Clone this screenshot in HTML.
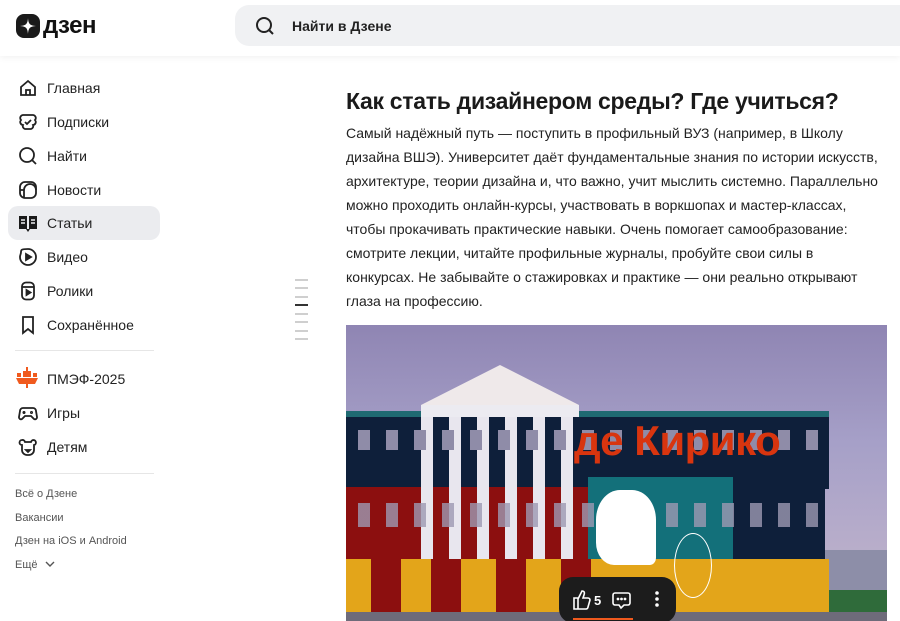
<!DOCTYPE html>
<html><head><meta charset="utf-8"><style>
*{margin:0;padding:0;box-sizing:border-box}
body{width:900px;height:621px;overflow:hidden;background:#fff;font-family:"Liberation Sans","DejaVu Sans",sans-serif;color:#1f1f1f;position:relative}
.hdr{position:absolute;left:0;top:0;width:900px;height:56px;background:#fff;box-shadow:0 2px 6px rgba(0,0,0,.05)}
.logo{position:absolute;left:16px;top:14px;display:flex;align-items:center}
.logo .b{width:24px;height:24px;background:#1a1a1a;border-radius:8px;position:relative}
.logo span{font-size:24px;font-weight:bold;margin-left:3px;letter-spacing:-.5px;line-height:24px;color:#111}
.search{position:absolute;left:235px;top:5px;width:680px;height:41px;background:#f0f1f3;border-radius:14px}
.search span{position:absolute;left:57px;top:13px;font-size:14px;font-weight:bold;color:#222}
.nav{position:absolute;left:8px;width:152px;height:34px;border-radius:10px}
.nav.act{background:#ebecef}
.nav svg{position:absolute;left:10px;top:7px}
.nav span{position:absolute;left:39px;top:9px;font-size:14px;color:#222}
.sep{position:absolute;left:15px;width:139px;height:1px;background:#e6e6e6}
.sm{position:absolute;left:15px;font-size:11px;color:#555}
h1{position:absolute;left:346px;top:88px;font-size:23px;font-weight:bold;color:#1a1a1a;letter-spacing:-.3px}
.p{position:absolute;left:346px;top:121px;font-size:14px;line-height:24px;color:#222;white-space:nowrap}
.tick{position:absolute;left:295px;width:13px;height:2px;background:#cfcfcf}
.img{position:absolute;left:346px;top:325px;width:541px;height:296px;overflow:hidden;background:linear-gradient(#8f85b3,#a6a0c8 40%,#c5b7cc)}
.img div{position:absolute}
</style></head><body>
<div class="hdr">
 <div class="logo"><div class="b"><svg width="24" height="24" viewBox="0 0 24 24"><path d="M12 4C12.4 10 14 11.6 20 12 14 12.4 12.4 14 12 20 11.6 14 10 12.4 4 12 10 11.6 11.6 10 12 4Z" fill="#fff"/></svg></div><span>дзен</span></div>
 <div class="search"><svg style="position:absolute;left:20px;top:11px" width="20" height="20" viewBox="0 0 20 20" fill="none" stroke="#222" stroke-width="2"><circle cx="9" cy="9" r="7"/><path d="M14 14l4 4"/></svg><span>Найти в Дзене</span></div>
</div>

<div class="nav" style="top:71px"><svg width="20" height="20" viewBox="0 0 20 20" fill="none" stroke="#222" stroke-width="1.8"><path d="M3 9l7-6 7 6v8H3z"/><path d="M8 17v-5h4v5"/></svg><span>Главная</span></div>
<div class="nav" style="top:105px"><svg width="20" height="20" viewBox="0 0 20 20" fill="none" stroke="#222" stroke-width="1.8"><path d="M5 3h10a3 3 0 0 1 2 5 3 3 0 0 1-2 5v0a3 3 0 0 1-2 4H7a3 3 0 0 1-2-4 3 3 0 0 1-2-5 3 3 0 0 1 2-5z"/><path d="M7 10l2 2 4-4"/></svg><span>Подписки</span></div>
<div class="nav" style="top:139px"><svg width="20" height="20" viewBox="0 0 20 20" fill="none" stroke="#222" stroke-width="1.8"><circle cx="9" cy="9" r="7"/><path d="M14 14l4 4"/></svg><span>Найти</span></div>
<div class="nav" style="top:173px"><svg width="20" height="20" viewBox="0 0 20 20" fill="none" stroke="#222" stroke-width="1.8"><rect x="2" y="2" width="16" height="16" rx="5"/><path d="M2 10h4v8M6 10a6 6 0 0 1 12 0"/></svg><span>Новости</span></div>
<div class="nav act" style="top:206px"><svg width="20" height="20" viewBox="0 0 20 20"><path d="M1 3h8v13H1zM11 3h8v13h-8z" fill="#1a1a1a"/><path d="M3 7h4M3 10h4M13 7h4M13 10h4" stroke="#ebecef" stroke-width="1.5"/><path d="M8 16h4l-2 3z" fill="#1a1a1a"/></svg><span>Статьи</span></div>
<div class="nav" style="top:240px"><svg width="20" height="20" viewBox="0 0 20 20" fill="none" stroke="#222" stroke-width="1.8"><path d="M10 2a8 8 0 1 1-8 8c0-2 1-3 1-5S3 2 10 2z"/><path d="M8 7l5 3-5 3z" fill="#222"/></svg><span>Видео</span></div>
<div class="nav" style="top:274px"><svg width="20" height="20" viewBox="0 0 20 20" fill="none" stroke="#222" stroke-width="1.8"><rect x="4" y="1.5" width="12" height="17" rx="4"/><path d="M4 6h12"/><path d="M8.5 9l4 2.5-4 2.5z" fill="#222"/></svg><span>Ролики</span></div>
<div class="nav" style="top:308px"><svg width="20" height="20" viewBox="0 0 20 20" fill="none" stroke="#222" stroke-width="1.8"><path d="M5 2h10v16l-5-4-5 4z"/></svg><span>Сохранённое</span></div>
<div class="sep" style="top:350px"></div>
<div class="nav" style="top:362px"><svg width="22" height="22" viewBox="0 0 22 22" fill="#f05a1e" style="left:8px;top:5px"><rect x="10" y="0" width="2" height="4"/><rect x="7" y="4" width="8" height="6"/><rect x="1" y="6" width="4" height="4"/><rect x="17" y="6" width="4" height="4"/><path d="M0 11h22l-3 6H3z"/><rect x="10" y="17" width="2" height="4"/></svg><span>ПМЭФ-2025</span></div>
<div class="nav" style="top:396px"><svg width="20" height="20" viewBox="0 0 20 20" fill="none" stroke="#222" stroke-width="1.8"><path d="M5 5h10a3 3 0 0 1 3 3l1 6a2 2 0 0 1-3 2l-3-3H7l-3 3a2 2 0 0 1-3-2l1-6a3 3 0 0 1 3-3z"/><path d="M6 8v3M4.5 9.5h3"/><circle cx="13.5" cy="9.5" r=".6"/></svg><span>Игры</span></div>
<div class="nav" style="top:430px"><svg width="20" height="20" viewBox="0 0 20 20" fill="none" stroke="#222" stroke-width="1.8"><path d="M4 3a2.5 2.5 0 0 1 3 2h6a2.5 2.5 0 1 1 3 3v5a5 5 0 0 1-5 5H9a5 5 0 0 1-5-5V8a2.5 2.5 0 0 1 0-5z"/><path d="M8 13h4l-2 2z" fill="#222"/></svg><span>Детям</span></div>
<div class="sep" style="top:473px"></div>
<div class="sm" style="top:488px">Всё о Дзене</div>
<div class="sm" style="top:512px">Вакансии</div>
<div class="sm" style="top:535px">Дзен на iOS и Android</div>
<div class="sm" style="top:559px">Ещё <svg width="10" height="8" viewBox="0 0 10 8" fill="none" stroke="#555" stroke-width="1.4" style="margin-left:4px"><path d="M1 2l4 4 4-4"/></svg></div>

<div class="tick" style="top:279px"></div><div class="tick" style="top:287px"></div><div class="tick" style="top:296px"></div><div class="tick" style="top:304px;background:#333"></div><div class="tick" style="top:313px"></div><div class="tick" style="top:321px"></div><div class="tick" style="top:330px"></div><div class="tick" style="top:338px"></div>

<h1>Как стать дизайнером среды? Где учиться?</h1>
<div class="p">Самый надёжный путь — поступить в профильный ВУЗ (например, в Школу<br>дизайна ВШЭ). Университет даёт фундаментальные знания по истории искусств,<br>архитектуре, теории дизайна и, что важно, учит мыслить системно. Параллельно<br>можно проходить онлайн-курсы, участвовать в воркшопах и мастер-классах,<br>чтобы прокачивать практические навыки. Очень помогает самообразование:<br>смотрите лекции, читайте профильные журналы, пробуйте свои силы в<br>конкурсах. Не забывайте о стажировках и практике — они реально открывают<br>глаза на профессию.</div>

<div class="img">
 <div style="left:470px;top:225px;width:71px;height:72px;background:#8d8ea8"></div>
 <div style="left:480px;top:265px;width:61px;height:25px;background:#2f6b3a"></div>
 <div style="left:0;top:86px;width:483px;height:78px;background:#0e1f3a"></div>
 <div style="left:0;top:86px;width:483px;height:6px;background:#1f6a72"></div>
 <div style="left:0;top:162px;width:242px;height:72px;background:#8c0f0f"></div>
 <div style="left:242px;top:152px;width:145px;height:82px;background:#13707a"></div>
 <div style="left:387px;top:152px;width:92px;height:82px;background:#0e1f3a"></div>
 <div style="left:0;top:234px;width:483px;height:53px;background:#e3a51a"></div>
 <div style="left:25px;top:234px;width:30px;height:53px;background:#8c0f0f"></div>
 <div style="left:85px;top:234px;width:30px;height:53px;background:#8c0f0f"></div>
 <div style="left:150px;top:234px;width:30px;height:53px;background:#8c0f0f"></div>
 <div style="left:215px;top:234px;width:30px;height:53px;background:#8c0f0f"></div>
 <div style="left:75px;top:82px;width:158px;height:152px;background:repeating-linear-gradient(90deg,#e8e6ee 0 12px,transparent 12px 28px)"></div>
 <div style="left:75px;top:80px;width:158px;height:12px;background:#ecebf1"></div>
 <div style="left:75px;top:40px;width:0;height:0;border-left:79px solid transparent;border-right:79px solid transparent;border-bottom:40px solid #efe9ea"></div>
 <div style="left:0;top:105px;width:483px;height:20px;background:repeating-linear-gradient(90deg,transparent 0 12px,#8f8ca8 12px 24px,transparent 24px 28px)"></div>
 <div style="left:0;top:178px;width:483px;height:24px;background:repeating-linear-gradient(90deg,transparent 0 12px,#9d99b2 12px 24px,transparent 24px 28px);opacity:.8"></div>
 <div style="left:228px;top:92px;font-size:42px;font-weight:bold;color:#d8350f;white-space:nowrap;letter-spacing:-.5px">де Кирико</div>
 <div style="left:250px;top:165px;width:60px;height:75px;background:#fff;border-radius:40% 40% 10% 30%"></div>
 <div style="left:328px;top:208px;width:38px;height:65px;border:1.5px solid #fff;border-radius:50%"></div>
 <div style="left:0;top:287px;width:541px;height:9px;background:#6e6b7a"></div>
 <div style="left:213px;top:252px;width:117px;height:46px;background:#1c1c1c;border-radius:14px"></div>
 <div style="left:227px;top:293px;width:60px;height:2px;background:#f05a1e"></div>
 <svg style="position:absolute;left:226px;top:263px" width="100" height="24" viewBox="0 0 100 24" fill="none" stroke="#fff" stroke-width="1.6"><path d="M2 10h4v11H2zM6 11l4-8c2 0 3 1 2 4l-1 3h5a2 2 0 0 1 2 2l-2 7a2 2 0 0 1-2 2H6"/><text x="22" y="17" fill="#fff" stroke="none" font-size="13" font-family="Liberation Sans" font-weight="bold">5</text><path d="M43 5h13a2 2 0 0 1 2 2v8a2 2 0 0 1-2 2h-4l-3 3-2-3h-4a2 2 0 0 1-2-2V7a2 2 0 0 1 2-2z"/><circle cx="46" cy="11" r=".6" fill="#fff"/><circle cx="49.5" cy="11" r=".6" fill="#fff"/><circle cx="53" cy="11" r=".6" fill="#fff"/><circle cx="85" cy="5" r="1" fill="#fff"/><circle cx="85" cy="11" r="1" fill="#fff"/><circle cx="85" cy="17" r="1" fill="#fff"/></svg>
</div>
</body></html>
